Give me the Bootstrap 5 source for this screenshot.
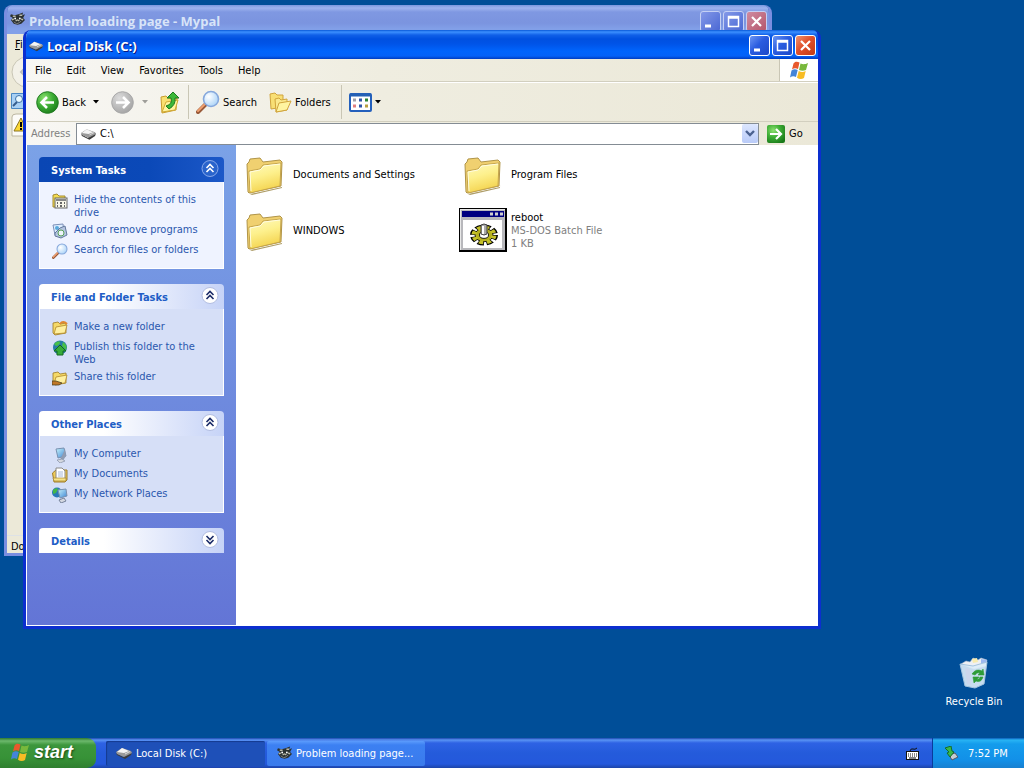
<!DOCTYPE html>
<html lang="en">
<head>
<meta charset="utf-8">
<meta name="viewport" content="width=device-width, initial-scale=1">
<title>Local Disk (C:)</title>
<link href="https://cdn.jsdelivr.net/npm/bootstrap@5.3.0/dist/css/bootstrap.min.css" rel="stylesheet">
<style>
body{font-family:"DejaVu Sans Condensed","DejaVu Sans",sans-serif;font-size:11px;line-height:13px;color:#000;background:#004e98;overflow:hidden}
button,input{font:inherit;color:inherit}
button{border:0;background:none;padding:0}
svg{display:block;flex:none}
a{text-decoration:none}
/* windows */
.win{border:3px solid #0831d9;border-top:0;border-radius:8px 8px 0 0;overflow:hidden}
.win-main{left:23px;top:30px;right:203px;bottom:109px;border-color:#0c2fcf}
.win-back{left:4px;top:5px;right:252px;bottom:182px;border-color:#7a8ee0}
.win-back-body{background:#ece9d8}
.titlebar{height:29px;margin:0 -3px;padding:2px 5px 0 6px;font:bold 13px/16px "Open Sans","Noto Sans",sans-serif;color:#fff;background:linear-gradient(#0858d8 0,#3c90ff 2px,#1060e8 5px,#0050e0 9px,#0054e8 14px,#0064fc 21px,#0462f8 26px,#003cc0 29px)}
.titlebar span{text-shadow:1px 1px #0a1883}
.win-back .titlebar{color:#d8e4f8;background:linear-gradient(#7a96df,#9db3ee 3px,#7f98e2 7px,#7b94df 18px,#82a0e8 24px)}
.win-back .titlebar span{text-shadow:none}
.capbtns{gap:2px}
.capbtn{width:21px;height:21px;border:1px solid #fff;border-radius:3px;background:linear-gradient(135deg,#6c96f4,#2a5ce0 45%,#1d49c8)}
.capbtn-close{background:linear-gradient(135deg,#f0936f,#e0502c 45%,#c03a14)}
.win-back .capbtn{border-color:#c4d0f4;background:linear-gradient(135deg,#8398e8,#4a68d4)}
.win-back .capbtn-close{background:linear-gradient(135deg,#cf8ba0,#b5566c)}
.bars{padding-left:1px;background:linear-gradient(90deg,#f8f7f4,#efede0 45%,#ebe8d8)}
.menubar{height:23px;border-bottom:1px solid #d2cfbf}
.menubar button{padding:0 7px 0 8px}
.throbber{width:39px;border-left:1px solid #c9c6b5}
.toolbar{height:40px;border-top:1px solid #fff;border-bottom:1px solid #d2cfbf;padding-left:9px}
.toolbar button{padding:0;gap:3px}
.back-more{margin:0 12px 0 7px}
.fwd-more{margin:0 12px 0 8px;opacity:.35}
.vsep{width:1px;height:34px;margin:0 7px 0 8px;background:#c9c6b5}
.folders-btn{margin:0 2px 0 12px}
.addressbar{height:23px}
.addrlabel{width:45px}
.addrbox{height:22px;border:1px solid #848c94;background:#fff}
.addrbox input{border:0;outline:0;background:none;min-width:0}
.drop{width:16px;height:19px;background:linear-gradient(#dce6fe,#b9cbf8);border-radius:2px}
.gobtn{width:51px;gap:4px}
/* task pane */
.content-row{border-bottom:1px solid #fff}
.taskpane{width:210px;padding:12px 12px 0;gap:15px;background:linear-gradient(#7ba2e7,#6375d6);border-left:1px solid #fff}
.pane-head{height:25px;padding:0 5px 3px 12px;color:#215dc6;background:linear-gradient(90deg,#fff 35%,#c6d3f7);border-radius:4px 4px 0 0}
.pane-head h2{font:bold 11px/13px "DejaVu Sans Condensed","DejaVu Sans",sans-serif;margin:5px 0 0}
.pane-sys{color:#fff;background:linear-gradient(90deg,#0a46b4,#0b49b8 60%,#1c58c8)}
.pane-body{padding:11px 12px 9px;gap:4px;background:#d6dff7;border:1px solid #fff;border-top:0}
.pane-body-sys{background:#eff3ff}
.pane-body a{color:#2a57ae;min-height:16px;gap:6px}
/* files */
.files{display:grid;grid-template-columns:repeat(auto-fill,218px);grid-auto-rows:56px;align-content:start;padding:1px 0 0 5px;background:#fff}
.tile{gap:4px}
.tile-icon{width:48px}
.folder-pad{padding:3px 0 0 5px}
.dim{color:#808080}
/* desktop */
.bin{right:18px;bottom:30px;width:64px;color:#fff;gap:6px}
.taskbar{height:30px;color:#fff;background:linear-gradient(#1c48b0 0,#5a94f4 2px,#2e62e4 5px,#245bdb 15px,#2458dc 26px,#1c44a8 30px)}
.start{width:96px;height:30px;padding:0 0 2px 10px;gap:4px;color:#fff;font:italic bold 18px/22px "Liberation Sans",Arial,sans-serif;text-shadow:1px 1px 2px #1c4a14;border-radius:0 9px 9px 0;background:linear-gradient(#2f7a30,#6cb86c 3px,#3c963c 7px,#379237 20px,#2f7f2f)}
.tasks{gap:2px;margin-left:10px}
.task{width:158px;height:25px;padding-left:10px;gap:4px;border-radius:2px;color:#fff;background:linear-gradient(#5c9cfc,#3c80f2 4px,#3a7bec)}
.task-on{background:#1e50b8;box-shadow:inset 1px 1px 1px #143a90;width:159px}
.kbd-ind{margin-right:13px}
.tray{width:92px;padding-left:11px;gap:10px;border-left:1px solid #0a3c9c;background:linear-gradient(#0c5cb8,#28b4f4 2px,#149cec 6px,#1290e8 22px,#1880d0)}
</style>
</head>
<body class="vh-100 d-flex flex-column">
<svg width="0" height="0" class="position-absolute" aria-hidden="true">
<defs>
<linearGradient id="gf" x1="0" y1="0" x2="0.3" y2="1"><stop offset="0" stop-color="#fffac0"/><stop offset=".5" stop-color="#fdf08c"/><stop offset="1" stop-color="#f4d450"/></linearGradient>
<radialGradient id="gg" cx=".35" cy=".3" r=".8"><stop offset="0" stop-color="#8ce070"/><stop offset=".5" stop-color="#3cac34"/><stop offset="1" stop-color="#187818"/></radialGradient>
<radialGradient id="gy" cx=".35" cy=".3" r=".8"><stop offset="0" stop-color="#dcdcdc"/><stop offset="1" stop-color="#a0a0a0"/></radialGradient>
<radialGradient id="gl" cx=".35" cy=".35" r=".7"><stop offset="0" stop-color="#fff"/><stop offset="1" stop-color="#acd4f8"/></radialGradient>
<linearGradient id="gb" x1="0" y1="0" x2="1" y2="1"><stop offset="0" stop-color="#c8f4fc"/><stop offset="1" stop-color="#3c84d4"/></linearGradient>
</defs>
<symbol id="folder" viewBox="0 0 38 38"><path d="M4 37 36 30 37 5 36 31 6 38Z" fill="#8c7428" opacity=".7"/><path d="M2 35 1 7 3 5 4 2 14 1 17 5 34 3 36 5 35 29 3 36Z" fill="#f0d070" stroke="#b09448"/><path d="M3 14 14 12 17 8 35 6 34 29 4 36Z" fill="url(#gf)" stroke="#c4a44c"/><path d="M5 34 4 15 14 13 18 9 34 7" fill="none" stroke="#fffce0"/></symbol>
<symbol id="drive" viewBox="0 0 16 12"><path d="M0 6 7 10 16 5 15 8 9 12 1 8Z" fill="#3c3c3c"/><path d="M0 5 6 1 15 4 16 6 8 10 1 7Z" fill="#999"/><path d="M1 5 6 1 13 4 8 6Z" fill="#f4f4f4"/><path d="M9 7 14 4.500" stroke="#ddd"/></symbol>
<symbol id="flag" viewBox="0 0 20 20"><path d="M4.500 3.500C6 1.500 8 1.500 10.500 2.500L9 9C7 8 5 8 3 9.500Z" fill="#e8582c"/><path d="M11.500 3.500C14 4.500 16 4.500 19 3L17 10C14.500 11 12.500 11 10 10Z" fill="#78b83c"/><path d="M2.500 10.500C5 9 6.500 9 8.700 10L7 17C5 16 3 16 1 17.500Z" fill="#4484d8"/><path d="M9.700 11C12 12 14 12.500 16.700 11L15 18C12.500 19.500 10 19 8 17.700Z" fill="#f8bc24"/></symbol>
<symbol id="raccoon" viewBox="0 0 16 16"><path d="M1 3 5 4 9 3 14 1 13 4 16 3 14 7 16 9 12 13 8 14 4 13 1 9 3 7 0 5Z" fill="#2a3030"/><path d="M3 5H6M10 4 13 4M2 9 4 8M12 8 14 9M6 10 8 9 10 10" stroke="#b8b8a8" stroke-width="1.500"/><path d="M4 11 7 13 10 12 12 10" stroke="#888" fill="none"/><circle cx="5.500" cy="7.500" r="1" fill="#fff"/><circle cx="10.500" cy="7.500" r="1" fill="#fff"/></symbol>
<symbol id="lens" viewBox="0 0 24 24"><path d="M2 22 10 14" stroke="#985838" stroke-width="4" stroke-linecap="round"/><path d="M2 21 9 14" stroke="#f0a070" stroke-width="2" stroke-linecap="round"/><circle cx="15" cy="9" r="7.500" fill="url(#gl)" stroke="#86a8dc" stroke-width="1.600"/></symbol>
<symbol id="minfolder" viewBox="0 0 16 16"><path d="M1 3 6 2 8 4 14 3 14 13 3 15 1 13Z" fill="#f5d968" stroke="#9c7824" stroke-width=".8"/><path d="M2 14 4 7 15 5 13 13Z" fill="#fff0a0" stroke="#b28928" stroke-width=".8"/></symbol>
<symbol id="up2" viewBox="0 0 17 17"><path d="M5 8 8.500 4.500 12 8M5 12 8.500 8.500 12 12" fill="none" stroke="currentColor" stroke-width="1.600"/></symbol>
<symbol id="min" viewBox="0 0 19 19"><path d="M4 14H10" stroke="#fff" stroke-width="3"/></symbol>
<symbol id="max" viewBox="0 0 19 19"><path d="M4.500 4.500H14.500V14.500H4.500ZM4 6H15" fill="none" stroke="#fff" stroke-width="1.500"/></symbol>
<symbol id="close" viewBox="0 0 19 19"><path d="M5 5 14 14M14 5 5 14" stroke="#fff" stroke-width="2.200"/></symbol>
<symbol id="caret" viewBox="0 0 6 4"><path d="M0 0H6L3 3.500Z" fill="currentColor"/></symbol>
</svg>

<main class="position-relative flex-grow-1">
  <section class="win win-back position-absolute d-flex flex-column" aria-label="Mypal">
    <header class="titlebar d-flex">
      <svg class="me-1 mt-1" width="15" height="16"><use href="#raccoon"/></svg><span class="flex-grow-1 pt-1 mt-1 lh-1">Problem loading page - Mypal</span>
      <div class="capbtns d-flex mt-1 lh-1">
        <button class="capbtn" aria-label="Minimize"><svg width="19" height="19"><use href="#min"/></svg></button><button class="capbtn" aria-label="Maximize"><svg width="19" height="19"><use href="#max"/></svg></button><button class="capbtn capbtn-close" aria-label="Close"><svg width="19" height="19"><use href="#close"/></svg></button>
      </div>
    </header>
    <div class="win-back-body flex-grow-1 d-flex flex-column">
      <div class="ps-2 pt-1"><u>F</u>ile</div>
      <svg class="mt-1" width="36" height="34" viewBox="0 0 36 34"><circle cx="20" cy="17" r="15" fill="#f3f1e8" stroke="#c9c6b5"/><path d="M18 13 14 17 18 21" fill="none" stroke="#bbb" stroke-width="2"/></svg>
      <svg class="ms-1 mt-1" width="18" height="16" viewBox="0 0 18 16"><path d="M.5.5H17V15.500H.500Z" fill="#a8d0f4" stroke="#4a88c4"/><circle cx="8" cy="6" r="3.500" fill="#e8f8ff" stroke="#3c70a8"/><path d="M2 13 6 9" stroke="#345c8c" stroke-width="2"/></svg>
      <svg class="ms-1 mt-1" width="20" height="24" viewBox="0 0 20 24"><path d="M1 23V4Q1 1 5 1H20V23Z" fill="#fcfbf7" stroke="#bbb6a0"/><path d="M10 5 16 18H3Z" fill="#fcd834" stroke="#8a7420"/><path d="M10 9V14M10 15V17" stroke="#000" stroke-width="2"/></svg>
      <div class="mt-auto border-top px-1 pt-1 pb-0">Done</div>
    </div>
  </section>

  <section class="win win-main position-absolute d-flex flex-column" aria-label="Local Disk (C:)">
    <header class="titlebar d-flex align-items-center">
      <svg class="me-1" width="14" height="12"><use href="#drive"/></svg><span class="flex-grow-1">Local Disk (C:)</span>
      <div class="capbtns d-flex">
        <button class="capbtn" aria-label="Minimize"><svg width="19" height="19"><use href="#min"/></svg></button><button class="capbtn" aria-label="Maximize"><svg width="19" height="19"><use href="#max"/></svg></button><button class="capbtn capbtn-close" aria-label="Close"><svg width="19" height="19"><use href="#close"/></svg></button>
      </div>
    </header>
    <div class="bars">
      <nav class="menubar d-flex">
        <div class="d-flex flex-grow-1"><button>File</button><button>Edit</button><button>View</button><button>Favorites</button><button>Tools</button><button>Help</button></div>
        <div class="throbber bg-white d-flex align-items-center justify-content-center"><svg width="20" height="20"><use href="#flag"/></svg></div>
      </nav>
      <div class="toolbar d-flex align-items-center">
        <button class="d-flex align-items-center"><svg width="23" height="23" viewBox="0 0 23 23"><circle cx="11.500" cy="11.500" r="10.800" fill="url(#gg)" stroke="#247c24"/><path d="M18 11.500H6M11 6 5.500 11.500 11 17" fill="none" stroke="#fff" stroke-width="2.600"/></svg><span>Back</span></button>
        <button class="back-more" aria-label="Back history"><svg width="6" height="4"><use href="#caret"/></svg></button>
        <button aria-label="Forward"><svg width="23" height="23" viewBox="0 0 23 23"><circle cx="11.500" cy="11.500" r="10.800" fill="url(#gy)" stroke="#a8a8a8"/><path d="M5 11.500H17M12 6 17.500 11.500 12 17" fill="none" stroke="#fff" stroke-width="2.600"/></svg></button>
        <button class="fwd-more" aria-label="Forward history"><svg width="6" height="4"><use href="#caret"/></svg></button>
        <button aria-label="Up"><svg width="20" height="24" viewBox="0 0 20 24"><path d="M1 7 6 6 8 8 17 8 16 20 2 23Z" fill="#f8e070" stroke="#c89c2c"/><path d="M2 22 6 12 18 10 15 20Z" fill="#fff6a0" stroke="#d0a834"/><path d="M6 16Q13 14 11 8H7L13 2 19 8H15Q16 15 9 19Z" fill="#3cb838" stroke="#1d7920"/></svg></button>
        <div class="vsep"></div>
        <button class="d-flex align-items-center"><svg width="24" height="24"><use href="#lens"/></svg><span>Search</span></button>
        <button class="folders-btn d-flex align-items-center"><svg width="23" height="21" viewBox="0 0 23 21"><path d="M1 2 6 1 8 3 14 3V15L2 17Z" fill="#f8df74" stroke="#d0a43c"/><path d="M6 7 10 6 12 8 18 7V18L7 20Z" fill="#fbe98c" stroke="#d0a43c"/><path d="M7 20 10 11 22 9 18 18Z" fill="#fff4a0" stroke="#d0a43c"/></svg><span>Folders</span></button>
        <div class="vsep"></div>
        <button class="d-flex align-items-center" aria-label="Views"><svg width="23" height="19" viewBox="0 0 23 19"><rect x="1" y="1" width="21" height="17" rx="1" fill="#fff" stroke="#2460bc" stroke-width="2"/><path d="M1 2H22" stroke="#2460b4" stroke-width="3"/><path d="M4 7H7" stroke="#a0a0a8" stroke-width="3"/><path d="M4 13H7" stroke="#e08080" stroke-width="3"/><path d="M10 7H13M10 13H13" stroke="#3056a8" stroke-width="3"/><path d="M16 7H19" stroke="#2a8434" stroke-width="3"/><path d="M16 13H19" stroke="#b8a040" stroke-width="3"/></svg><svg width="6" height="4"><use href="#caret"/></svg></button>
      </div>
      <div class="addressbar d-flex align-items-center ps-1">
        <label for="addr" class="addrlabel dim">Address</label>
        <div class="addrbox flex-grow-1 d-flex align-items-center ps-1"><svg width="15" height="12"><use href="#drive"/></svg><input id="addr" class="flex-grow-1 p-0 ps-1" value="C:\"><button class="drop" aria-label="Show addresses"><svg width="16" height="19" viewBox="0 0 16 19"><path d="M4 7 8 11 12 7" fill="none" stroke="#4a6190" stroke-width="2.400"/></svg></button></div>
        <button class="gobtn d-flex align-items-center ms-2"><svg width="18" height="18" viewBox="0 0 18 18"><rect width="18" height="18" rx="2" fill="url(#gg)"/><path d="M3 9H14M9 4 14 9 9 14" fill="none" stroke="#fff" stroke-width="2.200"/></svg><span>Go</span></button>
      </div>
    </div>
    <div class="content-row d-flex flex-grow-1">
      <aside class="taskpane d-flex flex-column flex-shrink-0">
        <section>
          <div class="pane-head pane-sys d-flex align-items-center justify-content-between"><h2>System Tasks</h2><button aria-label="Collapse"><svg width="18" height="17" viewBox="0 0 17 17"><circle cx="8.500" cy="8.500" r="8" fill="#2a64cc" stroke="#88a8e8"/><use href="#up2"/></svg></button></div>
          <ul class="pane-body pane-body-sys list-unstyled m-0 d-flex flex-column">
            <li><a href="#" class="d-flex"><svg width="16" height="16" viewBox="0 0 16 16"><path d="M1 2 5 1 7 3H13V14H1Z" fill="#f4dc50" stroke="#a48a30"/><rect x="3" y="5" width="12" height="10" fill="#f8f6e8" stroke="#666"/><path d="M4 7H14" stroke="#888" stroke-width="2"/><path d="M5 10H6M8 10H10M12 10H13M5 13H6M8 13H10M12 13H13" stroke="#666" stroke-width="2"/></svg><span>Hide the contents of this drive</span></a></li>
            <li><a href="#" class="d-flex"><svg width="16" height="16" viewBox="0 0 16 16"><path d="M1 2 11 1 12 10 3 12Z" fill="#dcecff" stroke="#7c90b8"/><circle cx="5" cy="5" r="2" fill="#58a8dc"/><path d="M8 5 13 3 15 12 9 15 3 13 3 10Z" fill="#b4c4e0" stroke="#62789c"/><circle cx="9" cy="10" r="3" fill="#eef4fc" stroke="#58a058"/></svg><span>Add or remove programs</span></a></li>
            <li><a href="#" class="d-flex"><svg width="16" height="16"><use href="#lens"/></svg><span class="text-nowrap">Search for files or folders</span></a></li>
          </ul>
        </section>
        <section>
          <div class="pane-head d-flex align-items-center justify-content-between"><h2>File and Folder Tasks</h2><button aria-label="Collapse"><svg width="18" height="17" viewBox="0 0 17 17" color="#1c2c68"><circle cx="8.500" cy="8.500" r="8" fill="#fff" stroke="#b0bce0"/><use href="#up2"/></svg></button></div>
          <ul class="pane-body list-unstyled m-0 d-flex flex-column">
            <li><a href="#" class="d-flex"><svg width="16" height="16" viewBox="0 0 16 16"><use href="#minfolder"/><path d="M8 4Q11 0 15 4" fill="none" stroke="#e08830" stroke-width="2"/></svg><span>Make a new folder</span></a></li>
            <li><a href="#" class="d-flex"><svg width="16" height="16" viewBox="0 0 16 16"><circle cx="8" cy="7.500" r="7" fill="#287ca8"/><path d="M2 4Q6 0 8 2 8 5 4 6ZM11 2Q16 5 14 10L10 6Z" fill="#48c048"/><path d="M8 5 14 11H11V15H5V11H2Z" fill="#36ac38" stroke="#146820"/></svg><span>Publish this folder to the Web</span></a></li>
            <li><a href="#" class="d-flex"><svg width="16" height="16" viewBox="0 0 16 16"><use href="#minfolder"/><path d="M0 11H4L7 12 10 13 7 15H0Z" fill="#c07828" stroke="#3c3820" stroke-width=".7"/></svg><span>Share this folder</span></a></li>
          </ul>
        </section>
        <section>
          <div class="pane-head d-flex align-items-center justify-content-between"><h2>Other Places</h2><button aria-label="Collapse"><svg width="18" height="17" viewBox="0 0 17 17" color="#1c2c68"><circle cx="8.500" cy="8.500" r="8" fill="#fff" stroke="#b0bce0"/><use href="#up2"/></svg></button></div>
          <ul class="pane-body list-unstyled m-0 d-flex flex-column">
            <li><a href="#" class="d-flex"><svg width="16" height="16" viewBox="0 0 16 16"><path d="M4 2 12 1 14 9 6 11Z" fill="url(#gb)" stroke="#7890b0"/><path d="M13 2 14 9 10 15 7 14 9 11" fill="#909cb4"/><path d="M5 13 10 12 13 14 8 16Z" fill="#d4d8e0" stroke="#78849c" stroke-width=".6"/></svg><span>My Computer</span></a></li>
            <li><a href="#" class="d-flex"><svg width="16" height="16" viewBox="0 0 16 16"><path d="M0.500 6 4 3H15V13L13 15H2Z" fill="#f0cc58" stroke="#9c7c2c"/><path d="M4 1H10L13 4V12H4Z" fill="#fff" stroke="#888"/><path d="M6 5H11M6 7H11M6 9H11" stroke="#a8b8d8"/><path d="M1 11H14V14H2Z" fill="#f8e488" stroke="#a48430" stroke-width=".7"/></svg><span>My Documents</span></a></li>
            <li><a href="#" class="d-flex"><svg width="16" height="16" viewBox="0 0 16 16"><circle cx="5" cy="5.500" r="5" fill="#2a78b8"/><path d="M1 3Q4 0 6 2L4 6 1 7Z" fill="#44b848"/><path d="M6 3 14 2 15 9 8 11Z" fill="url(#gb)" stroke="#7890b0"/><path d="M7 13 12 11 14 14 9 16Z" fill="#d4d8e0" stroke="#78849c"/></svg><span>My Network Places</span></a></li>
          </ul>
        </section>
        <section>
          <div class="pane-head d-flex align-items-center justify-content-between"><h2>Details</h2><button aria-label="Expand"><svg width="18" height="17" viewBox="0 0 17 17" color="#1c2c68"><circle cx="8.500" cy="8.500" r="8" fill="#fff" stroke="#b0bce0"/><path d="M5 5 8.500 8.500 12 5M5 9 8.500 12.500 12 9" fill="none" stroke="currentColor" stroke-width="1.600"/></svg></button></div>
        </section>
      </aside>
      <div class="files flex-grow-1">
        <div class="tile d-flex align-items-center"><div class="tile-icon folder-pad"><svg width="38" height="38"><use href="#folder"/></svg></div><span>Documents and Settings</span></div>
        <div class="tile d-flex align-items-center"><div class="tile-icon folder-pad"><svg width="38" height="38"><use href="#folder"/></svg></div><span>Program Files</span></div>
        <div class="tile d-flex align-items-center"><div class="tile-icon folder-pad"><svg width="38" height="38"><use href="#folder"/></svg></div><span>WINDOWS</span></div>
        <div class="tile d-flex align-items-center"><div class="tile-icon"><svg width="48" height="44" viewBox="0 0 48 44"><path d="M0 0H48V44H0Z" fill="#000"/><path d="M1 1H46V42H1Z" fill="#e8e8e8"/><path d="M2 2H46V42H2Z" fill="#b8b8bc"/><path d="M3 3H45V9H3Z" fill="#000080"/><path d="M31 6H34M36 6H39M41 6H44" stroke="#d0d0d0" stroke-width="3"/><path d="M4 12H43V40H4Z" fill="#fff"/><g transform="translate(25 27) scale(1 .75)"><circle r="10" fill="none" stroke="#000" stroke-width="8" stroke-dasharray="5.500 2.350"/><circle r="9" fill="#b4b020" stroke="#000"/><circle r="10" fill="none" stroke="#c4c028" stroke-width="5" stroke-dasharray="4 3.850" stroke-dashoffset="-.75"/><circle r="4.500" fill="#fff" stroke="#000"/></g><path d="M22 17Q25 15 28 17V26Q25 28 22 26Z" fill="#aaa" stroke="#444"/><path d="M24 18V26" stroke="#fff" stroke-width="2"/></svg></div><div>reboot<div class="dim">MS-DOS Batch File</div><div class="dim">1 KB</div></div></div>
      </div>
    </div>
  </section>

  <a href="#" class="bin position-absolute d-flex flex-column align-items-center text-nowrap"><svg width="30" height="32" viewBox="0 0 30 32"><path d="M2 7 7 4 11 5 14 1 19 3 22 1 28 3 27 9 15 12Z" fill="#eef0f4" stroke="#a8b8d0" stroke-width=".6"/><path d="M13 2 18 1 19 5 14 6Z" fill="#f8ecb0"/><path d="M22 2 28 3 26 7 22 6Z" fill="#9cb8f0"/><path d="M1 7 14 9 28 5 25 27 16 31 6 29Z" fill="#dcecf8" fill-opacity=".9" stroke="#a4c4e0"/><path d="M6 11 11 12 12 28 8 27Z" fill="#ccd6ec"/><path d="M13 17Q17 11 23 14L24 12 25 18 19 18 21 16Q18 15 16 18ZM24 20Q22 26 17 24L15 26 14 20 20 20 18 22Q20 23 21 20Z" fill="#2c9c38" stroke="#2c9c38" stroke-width=".6"/></svg><span>Recycle Bin</span></a>
</main>

<footer class="taskbar d-flex align-items-center flex-shrink-0">
  <button class="start d-flex align-items-center"><svg width="20" height="20"><use href="#flag"/></svg>start</button>
  <div class="tasks d-flex flex-grow-1">
    <button class="task task-on d-flex align-items-center"><svg width="16" height="12"><use href="#drive"/></svg>Local Disk (C:)</button>
    <button class="task d-flex align-items-center"><svg width="15" height="16"><use href="#raccoon"/></svg>Problem loading page...</button>
  </div>
  <svg class="kbd-ind" width="13" height="13" viewBox="0 0 13 13"><path d="M4 4Q5 1 7 2T11 1" stroke="#111" fill="none"/><rect x=".500" y="4.500" width="12" height="8" fill="#fff" stroke="#111"/><path d="M2 7H11M2 9H11" stroke="#111" stroke-dasharray="1 1"/><path d="M3 11H10" stroke="#111"/></svg>
  <div class="tray align-self-stretch d-flex align-items-center"><svg width="14" height="15" viewBox="0 0 14 15"><path d="M5 9 11 7 14 11 8 14Z" fill="#c8ccd0" stroke="#556"/><path d="M1 2 7 0 8 5 10 6 6 11 3 7 5 6Z" fill="#38b848" stroke="#146c2c"/></svg><time>7:52 PM</time></div>
</footer>
<script src="https://cdn.jsdelivr.net/npm/bootstrap@5.3.0/dist/js/bootstrap.bundle.min.js"></script>
</body>
</html>
